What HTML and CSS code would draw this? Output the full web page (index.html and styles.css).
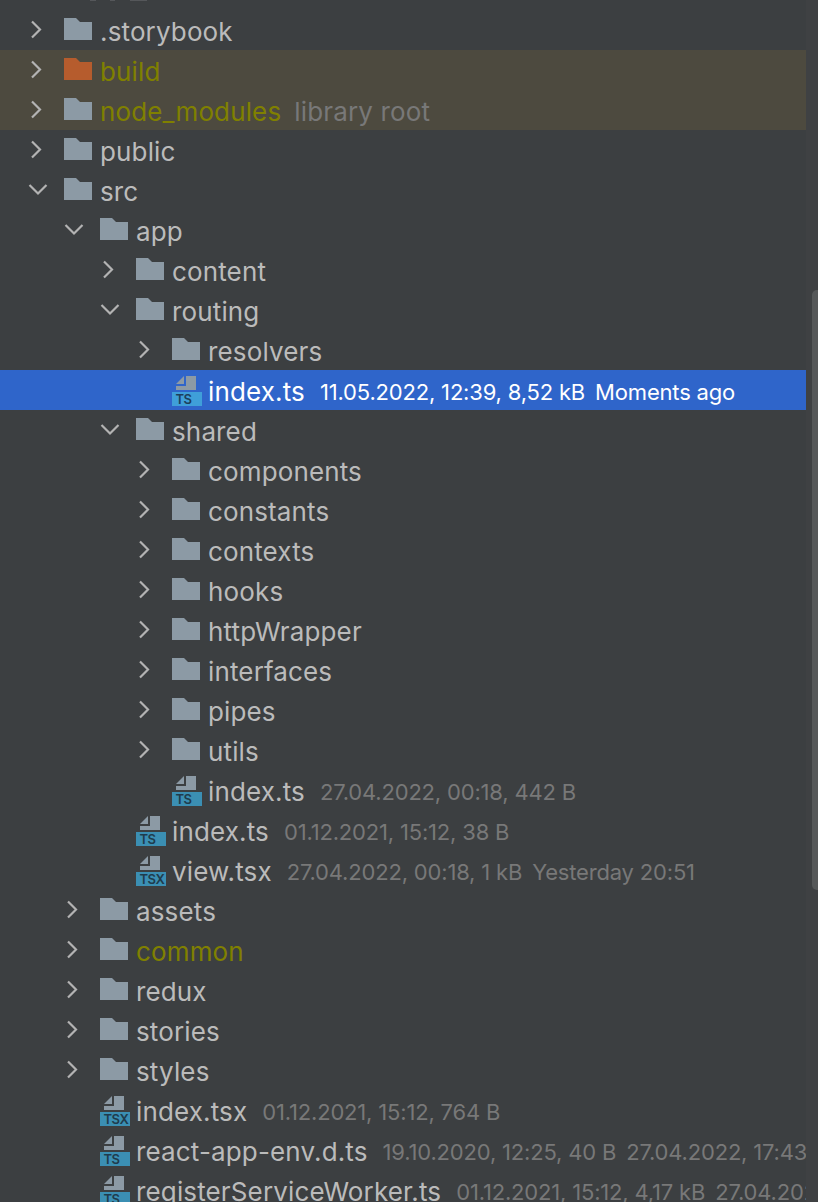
FILE: index.html
```html
<!DOCTYPE html>
<html lang="en">
<head>
<meta charset="utf-8">
<title>Project tree</title>
<link rel="stylesheet" href="styles.css">
</head>
<body>
<svg class="defs" width="0" height="0" aria-hidden="true">
  <defs>
    <symbol id="folder" viewBox="0 0 28 22"><path d="M0 0H12L16 4H28V22H0Z"/></symbol>
    <symbol id="right" viewBox="0 0 14 20"><path d="M2 1.5L10 9.5L2 17.5" fill="none" stroke="currentColor" stroke-width="2.2"/></symbol>
    <symbol id="down" viewBox="0 0 20 14"><path d="M1.5 2L10 10.5L18.5 2" fill="none" stroke="currentColor" stroke-width="2.2"/></symbol>
    <symbol id="doc" viewBox="0 0 30 16"><path d="M4 8L12 0V8ZM14 0H24V14H4V10H14Z"/></symbol>
  </defs>
</svg>
<main class="panel">
  <div class="tree">
    <div class="clip"><i class="speck s1"></i><i class="speck s2"></i><i class="speck s3"></i></div>

    <div class="row d0"><span class="arrow"><svg class="chev-r"><use href="#right"/></svg></span><svg class="folder"><use href="#folder"/></svg><span class="name">.storybook</span></div>
    <div class="row d0 excluded"><span class="arrow"><svg class="chev-r"><use href="#right"/></svg></span><svg class="folder orange"><use href="#folder"/></svg><span class="name olive">build</span></div>
    <div class="row d0 excluded"><span class="arrow"><svg class="chev-r"><use href="#right"/></svg></span><svg class="folder"><use href="#folder"/></svg><span class="name olive">node_modules</span><span class="note tall">library root</span></div>
    <div class="row d0"><span class="arrow"><svg class="chev-r"><use href="#right"/></svg></span><svg class="folder"><use href="#folder"/></svg><span class="name">public</span></div>
    <div class="row d0"><span class="arrow"><svg class="chev-d"><use href="#down"/></svg></span><svg class="folder"><use href="#folder"/></svg><span class="name">src</span></div>
    <div class="row d1"><span class="arrow"><svg class="chev-d"><use href="#down"/></svg></span><svg class="folder"><use href="#folder"/></svg><span class="name">app</span></div>
    <div class="row d2"><span class="arrow"><svg class="chev-r"><use href="#right"/></svg></span><svg class="folder"><use href="#folder"/></svg><span class="name">content</span></div>
    <div class="row d2"><span class="arrow"><svg class="chev-d"><use href="#down"/></svg></span><svg class="folder"><use href="#folder"/></svg><span class="name">routing</span></div>
    <div class="row d3"><span class="arrow"><svg class="chev-r"><use href="#right"/></svg></span><svg class="folder"><use href="#folder"/></svg><span class="name">resolvers</span></div>
    <div class="row d3 selected"><span class="arrow"></span><span class="file"><svg class="doc"><use href="#doc"/></svg><span class="badge">TS</span></span><span class="name">index.ts</span><span class="note">11.05.2022, 12:39, 8,52 kB</span><span class="note second">Moments ago</span></div>
    <div class="row d2"><span class="arrow"><svg class="chev-d"><use href="#down"/></svg></span><svg class="folder"><use href="#folder"/></svg><span class="name">shared</span></div>
    <div class="row d3"><span class="arrow"><svg class="chev-r"><use href="#right"/></svg></span><svg class="folder"><use href="#folder"/></svg><span class="name">components</span></div>
    <div class="row d3"><span class="arrow"><svg class="chev-r"><use href="#right"/></svg></span><svg class="folder"><use href="#folder"/></svg><span class="name">constants</span></div>
    <div class="row d3"><span class="arrow"><svg class="chev-r"><use href="#right"/></svg></span><svg class="folder"><use href="#folder"/></svg><span class="name">contexts</span></div>
    <div class="row d3"><span class="arrow"><svg class="chev-r"><use href="#right"/></svg></span><svg class="folder"><use href="#folder"/></svg><span class="name">hooks</span></div>
    <div class="row d3"><span class="arrow"><svg class="chev-r"><use href="#right"/></svg></span><svg class="folder"><use href="#folder"/></svg><span class="name">httpWrapper</span></div>
    <div class="row d3"><span class="arrow"><svg class="chev-r"><use href="#right"/></svg></span><svg class="folder"><use href="#folder"/></svg><span class="name">interfaces</span></div>
    <div class="row d3"><span class="arrow"><svg class="chev-r"><use href="#right"/></svg></span><svg class="folder"><use href="#folder"/></svg><span class="name">pipes</span></div>
    <div class="row d3"><span class="arrow"><svg class="chev-r"><use href="#right"/></svg></span><svg class="folder"><use href="#folder"/></svg><span class="name">utils</span></div>
    <div class="row d3"><span class="arrow"></span><span class="file"><svg class="doc"><use href="#doc"/></svg><span class="badge">TS</span></span><span class="name">index.ts</span><span class="note">27.04.2022, 00:18, 442 B</span></div>
    <div class="row d2"><span class="arrow"></span><span class="file"><svg class="doc"><use href="#doc"/></svg><span class="badge">TS</span></span><span class="name">index.ts</span><span class="note">01.12.2021, 15:12, 38 B</span></div>
    <div class="row d2"><span class="arrow"></span><span class="file"><svg class="doc"><use href="#doc"/></svg><span class="badge">TSX</span></span><span class="name">view.tsx</span><span class="note">27.04.2022, 00:18, 1 kB</span><span class="note second">Yesterday 20:51</span></div>
    <div class="row d1"><span class="arrow"><svg class="chev-r"><use href="#right"/></svg></span><svg class="folder"><use href="#folder"/></svg><span class="name">assets</span></div>
    <div class="row d1"><span class="arrow"><svg class="chev-r"><use href="#right"/></svg></span><svg class="folder"><use href="#folder"/></svg><span class="name olive">common</span></div>
    <div class="row d1"><span class="arrow"><svg class="chev-r"><use href="#right"/></svg></span><svg class="folder"><use href="#folder"/></svg><span class="name">redux</span></div>
    <div class="row d1"><span class="arrow"><svg class="chev-r"><use href="#right"/></svg></span><svg class="folder"><use href="#folder"/></svg><span class="name">stories</span></div>
    <div class="row d1"><span class="arrow"><svg class="chev-r"><use href="#right"/></svg></span><svg class="folder"><use href="#folder"/></svg><span class="name">styles</span></div>
    <div class="row d1"><span class="arrow"></span><span class="file"><svg class="doc"><use href="#doc"/></svg><span class="badge">TSX</span></span><span class="name">index.tsx</span><span class="note">01.12.2021, 15:12, 764 B</span></div>
    <div class="row d1"><span class="arrow"></span><span class="file"><svg class="doc"><use href="#doc"/></svg><span class="badge">TS</span></span><span class="name">react-app-env.d.ts</span><span class="note">19.10.2020, 12:25, 40 B</span><span class="note second">27.04.2022, 17:43</span></div>
    <div class="row d1"><span class="arrow"></span><span class="file"><svg class="doc"><use href="#doc"/></svg><span class="badge">TS</span></span><span class="name">registerServiceWorker.ts</span><span class="note">01.12.2021, 15:12, 4,17 kB</span><span class="note second">27.04.2022, 17:43</span></div>
  </div>
  <div class="gutter"><div class="thumb"></div></div>
</main>
</body>
</html>
```

FILE: styles.css
```css
* { box-sizing: border-box; }
html, body { margin: 0; height: 100%; background: #3c3f41; }
.defs { display: block; height: 0; }
.panel {
  display: flex;
  width: 818px;
  height: 1202px;
  overflow: hidden;
  font-family: Inter, "Liberation Sans", sans-serif;
  color: #bbbbbb;
}
.tree { flex: 0 0 806px; overflow: hidden; background: #3c3f41; }
.clip { display: flex; height: 10px; padding-left: 90px; }
.speck { display: block; height: 1px; background: #55575a; }
.s1 { width: 6px; }
.s2 { width: 5px; margin-left: 14px; }
.s3 { width: 17px; margin-left: 15px; }
.row {
  display: flex;
  align-items: center;
  height: 40px;
  white-space: nowrap;
  font-size: 26px;
  letter-spacing: .14px;
}
.d0 { padding-left: 28px; }
.d1 { padding-left: 64px; }
.d2 { padding-left: 100px; }
.d3 { padding-left: 136px; }
.excluded { background: #4d4a3f; }
.selected { background: #2f65ca; color: #ffffff; }
.arrow { flex: 0 0 36px; display: flex; align-items: center; color: #b3b3b3; }
.chev-r { width: 14px; height: 20px; margin-left: 2px; }
.chev-d { width: 20px; height: 14px; }
.folder { flex: 0 0 28px; width: 28px; height: 22px; margin-right: 8px; fill: #8c9aa5; margin-top: -2px; }
.orange { fill: #b65c2d; }
.file { flex: 0 0 30px; width: 30px; height: 30px; margin-right: 6px; margin-top: 2px; }
.doc { display: block; width: 30px; height: 16px; fill: #8c9aa5; }
.badge {
  display: block;
  height: 14px;
  padding-left: 3.5px;
  background: #3b8fb3;
  color: #1f3c4d;
  font-size: 13px;
  font-weight: 600;
  line-height: 15px;
  letter-spacing: -.5px;
}
.selected .badge { background: #3f9fd9; color: #1d3f5c; }
.name { padding-top: 2px; }
.olive { color: #808000; }
.note { margin-left: 15px; padding-top: 4px; font-size: 22px; letter-spacing: -.18px; color: #787878; }
.note.tall { margin-left: 13px; padding-top: 2px; font-size: 26px; letter-spacing: .14px; }
.note.second { margin-left: 10px; }
.selected .note { color: #ffffff; }
.gutter { flex: 0 0 12px; padding: 290px 0 0 6px; background: #3f4143; }
.thumb { height: 600px; background: #565859; border-radius: 5px 0 0 5px; }
```
